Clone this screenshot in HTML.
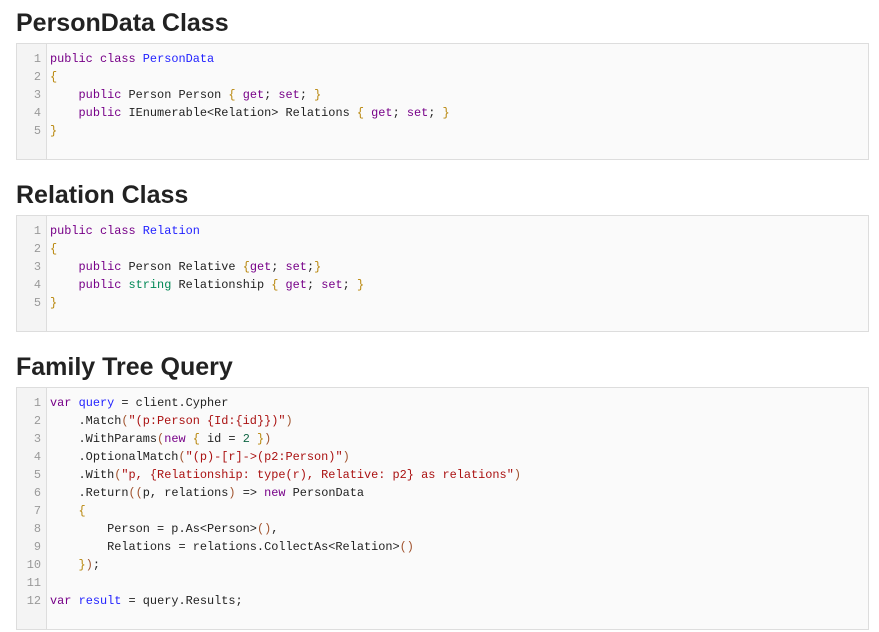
<!DOCTYPE html>
<html><head><style>
body{margin:0;background:#fff;font-family:"Liberation Sans",sans-serif;}
h2{position:absolute;left:16px;margin:0;font-size:25px;font-weight:bold;color:#222;line-height:28px;}
.box{position:absolute;left:16px;width:851px;border:1px solid #ddd;background:#fafafa;}
.g{position:absolute;left:0;top:0;bottom:0;width:29px;border-right:1px solid #ddd;background:#f4f4f4;}
pre{margin:0;position:absolute;left:0;top:6px;font-family:"Liberation Mono",monospace;font-size:11.9px;line-height:18px;color:#222;}
.n{display:inline-block;width:24px;text-align:right;color:#999;margin-right:9px;}
.k{color:#708}.t{color:#22f}.b{color:#b8860b}.p{color:#a0522d}.s{color:#a11}.v{color:#05a}.m{color:#164}.q{color:#085}
</style></head><body>
<h2 style="top:9px">PersonData Class</h2>
<div class="box" style="top:43px;height:115px"><div class="g"></div>
<pre><span class="n">1</span><span class="k">public</span> <span class="k">class</span> <span class="t">PersonData</span>
<span class="n">2</span><span class="b">{</span>
<span class="n">3</span>    <span class="k">public</span> Person Person <span class="b">{</span> <span class="k">get</span>; <span class="k">set</span>; <span class="b">}</span>
<span class="n">4</span>    <span class="k">public</span> IEnumerable&lt;Relation&gt; Relations <span class="b">{</span> <span class="k">get</span>; <span class="k">set</span>; <span class="b">}</span>
<span class="n">5</span><span class="b">}</span></pre></div>
<h2 style="top:181px">Relation Class</h2>
<div class="box" style="top:215px;height:115px"><div class="g"></div>
<pre><span class="n">1</span><span class="k">public</span> <span class="k">class</span> <span class="t">Relation</span>
<span class="n">2</span><span class="b">{</span>
<span class="n">3</span>    <span class="k">public</span> Person Relative <span class="b">{</span><span class="k">get</span>; <span class="k">set</span>;<span class="b">}</span>
<span class="n">4</span>    <span class="k">public</span> <span class="q">string</span> Relationship <span class="b">{</span> <span class="k">get</span>; <span class="k">set</span>; <span class="b">}</span>
<span class="n">5</span><span class="b">}</span></pre></div>
<h2 style="top:353px">Family Tree Query</h2>
<div class="box" style="top:387px;height:241px"><div class="g"></div>
<pre><span class="n">1</span><span class="k">var</span> <span class="t">query</span> = client.Cypher
<span class="n">2</span>    .Match<span class="p">(</span><span class="s">"(p:Person {Id:{id}})"</span><span class="p">)</span>
<span class="n">3</span>    .WithParams<span class="p">(</span><span class="k">new</span> <span class="b">{</span> id = <span class="m">2</span> <span class="b">}</span><span class="p">)</span>
<span class="n">4</span>    .OptionalMatch<span class="p">(</span><span class="s">"(p)-[r]-&gt;(p2:Person)"</span><span class="p">)</span>
<span class="n">5</span>    .With<span class="p">(</span><span class="s">"p, {Relationship: type(r), Relative: p2} as relations"</span><span class="p">)</span>
<span class="n">6</span>    .Return<span class="p">((</span>p, relations<span class="p">)</span> =&gt; <span class="k">new</span> PersonData
<span class="n">7</span>    <span class="b">{</span>
<span class="n">8</span>        Person = p.As&lt;Person&gt;<span class="p">()</span>,
<span class="n">9</span>        Relations = relations.CollectAs&lt;Relation&gt;<span class="p">()</span>
<span class="n">10</span>    <span class="b">}</span><span class="p">)</span>;
<span class="n">11</span>
<span class="n">12</span><span class="k">var</span> <span class="t">result</span> = query.Results;</pre></div>
</body></html>
